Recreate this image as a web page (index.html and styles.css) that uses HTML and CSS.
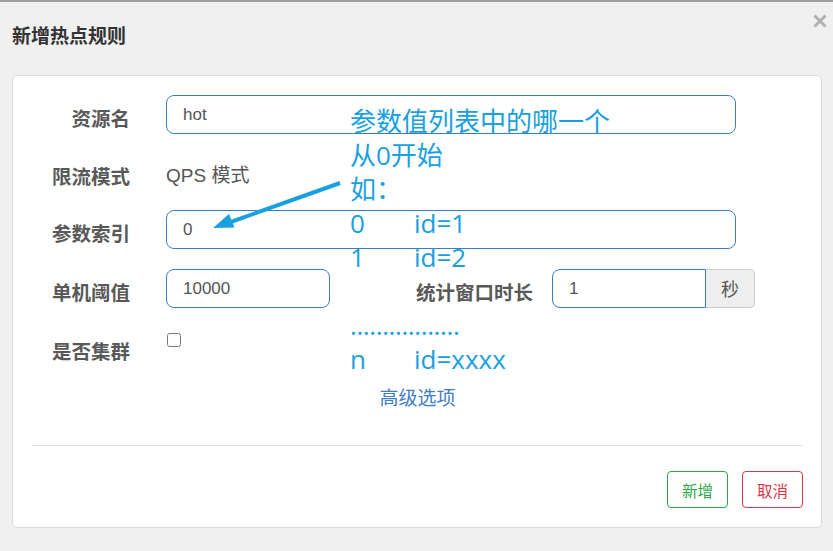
FILE: index.html
```html
<!DOCTYPE html>
<html lang="zh">
<head>
<meta charset="utf-8">
<title>新增热点规则</title>
<link rel="stylesheet" href="styles.css">
</head>
<body>
<div class="dialog">
  <header class="head">
    <h1 class="title">新增热点规则</h1>
    <svg class="close" width="14" height="14" viewBox="0 0 14 14"><path d="M1.5 1.5 L12.5 12.5 M12.5 1.5 L1.5 12.5" stroke="#b0b0b0" stroke-width="3" stroke-linecap="butt"/></svg>
  </header>
  <div class="card">
    <div class="form">
      <div class="row">
        <span class="label">资源名</span>
        <input class="ctl wide" type="text" value="hot">
      </div>
      <div class="row row-static">
        <span class="label">限流模式</span>
        <span class="static">QPS 模式</span>
      </div>
      <div class="row">
        <span class="label">参数索引</span>
        <input class="ctl wide" type="text" value="0">
      </div>
      <div class="row">
        <span class="label">单机阈值</span>
        <input class="ctl narrow" type="text" value="10000">
        <span class="label label-mid">统计窗口时长</span>
        <div class="group">
          <input class="ctl group-ctl" type="text" value="1">
          <span class="addon">秒</span>
        </div>
      </div>
      <div class="row row-check">
        <span class="label">是否集群</span>
        <input class="check" type="checkbox">
      </div>
    </div>
    <div class="adv"><a class="adv-link">高级选项</a></div>
    <hr class="sep">
    <div class="actions">
      <button class="btn btn-add">新增</button>
      <button class="btn btn-cancel">取消</button>
    </div>
  </div>
  <div class="note">
    <div>参数值列表中的哪一个</div>
    <div>从0开始</div>
    <div>如：</div>
    <div><span class="k">0</span>id=1</div>
    <div><span class="k">1</span>id=2</div>
    <div>&nbsp;</div>
    <div class="dots">.................</div>
    <div><span class="k">n</span>id=xxxx</div>
  </div>
  <svg class="arrow" width="833" height="551" viewBox="0 0 833 551">
    <line x1="340" y1="183" x2="228" y2="223" stroke="#18a0e0" stroke-width="4"/>
    <polygon points="213,228 234.5,227.5 229,214" fill="#18a0e0"/>
  </svg>
</div>
</body>
</html>
```
FILE: styles.css
```css
html, body {
  margin: 0;
  padding: 0;
}
body {
  width: 833px;
  height: 551px;
  background: #f0f0f0;
  overflow: hidden;
  font-family: "Noto Sans CJK SC", sans-serif;
}
.dialog {
  position: relative;
  height: 549px;
  border-top: 2px solid #9d9d9d;
  background: #f0f0f0;
}
.head {
  height: 73px;
  display: flex;
  justify-content: space-between;
  align-items: flex-start;
  padding: 0 6px 0 12px;
  box-sizing: border-box;
}
.title {
  margin: 20px 0 0 0;
  font-size: 19px;
  line-height: 26px;
  font-weight: bold;
  color: #333;
}
.close {
  margin-top: 12px;
}
.card {
  margin: 0 11px 0 12px;
  background: #fff;
  border: 1px solid #dcdcdc;
  border-radius: 5px;
  padding: 19px 18px 19px 19px;
}
.form {
  display: flex;
  flex-direction: column;
  gap: 20px;
}
.row {
  display: flex;
  align-items: flex-start;
  height: 39px;
}
.row-static {
  height: 36px;
}
.label {
  width: 98px;
  flex: none;
  text-align: right;
  margin-right: 36px;
  font-size: 19.5px;
  font-weight: bold;
  color: #595959;
  line-height: 39px;
  padding-top: 3px;
  box-sizing: border-box;
  height: 39px;
  white-space: nowrap;
}
.row-static .label {
  line-height: 36px;
  padding-top: 4px;
  height: 36px;
}
.static {
  font-family: "Liberation Sans", "Noto Sans CJK SC", sans-serif;
  font-size: 19px;
  color: #555;
  line-height: 36px;
  padding-top: 4px;
}
.ctl {
  box-sizing: border-box;
  height: 39px;
  border: 1px solid #3c7ebf;
  border-radius: 8px;
  padding: 0 16px;
  font-family: "Liberation Sans", sans-serif;
  font-size: 17px;
  color: #555;
  background: transparent;
  outline: none;
  margin: 0;
}
.wide {
  width: 570px;
}
.narrow {
  width: 164px;
}
.label-mid {
  width: 203px;
  margin-right: 19px;
}
.group {
  display: flex;
  width: 203px;
}
.group-ctl {
  width: 154px;
  border-radius: 8px 0 0 8px;
}
.addon {
  box-sizing: border-box;
  width: 49px;
  height: 39px;
  background: #eee;
  border: 1px solid #ccc;
  border-left: none;
  border-radius: 0 5px 5px 0;
  text-align: center;
  line-height: 37px;
  font-size: 18px;
  color: #555;
}
.row-check {
  height: 40px;
}
.check {
  margin: 5px 0 0 1px;
  width: 14px;
  height: 14px;
}
.adv {
  text-align: center;
  margin-top: 17px;
  line-height: 24px;
}
.adv-link {
  font-size: 19px;
  color: #3f7dc6;
}
.sep {
  margin: 35px 0 0 0;
  border: none;
  border-top: 1px solid #e5e5e5;
  height: 0;
}
.actions {
  display: flex;
  justify-content: flex-end;
  gap: 14px;
  margin-top: 25px;
}
.btn {
  box-sizing: border-box;
  width: 61px;
  height: 37px;
  background: #fff;
  border-radius: 4px;
  font-family: "Noto Sans CJK SC", sans-serif;
  font-size: 15.5px;
  padding: 0;
}
.btn-add {
  border: 1px solid #28a745;
  color: #28a745;
}
.btn-cancel {
  border: 1px solid #dc3545;
  color: #dc3545;
}
.note {
  position: absolute;
  left: 350px;
  top: 102px;
  font-family: "Open Sans", "Noto Sans CJK SC", sans-serif;
  font-size: 26px;
  line-height: 34px;
  color: #18a0e0;
  white-space: nowrap;
  pointer-events: none;
}
.k {
  display: inline-block;
  width: 64px;
}
.dots {
  letter-spacing: -0.4px;
}
.arrow {
  position: absolute;
  left: 0;
  top: -2px;
  pointer-events: none;
}
```
